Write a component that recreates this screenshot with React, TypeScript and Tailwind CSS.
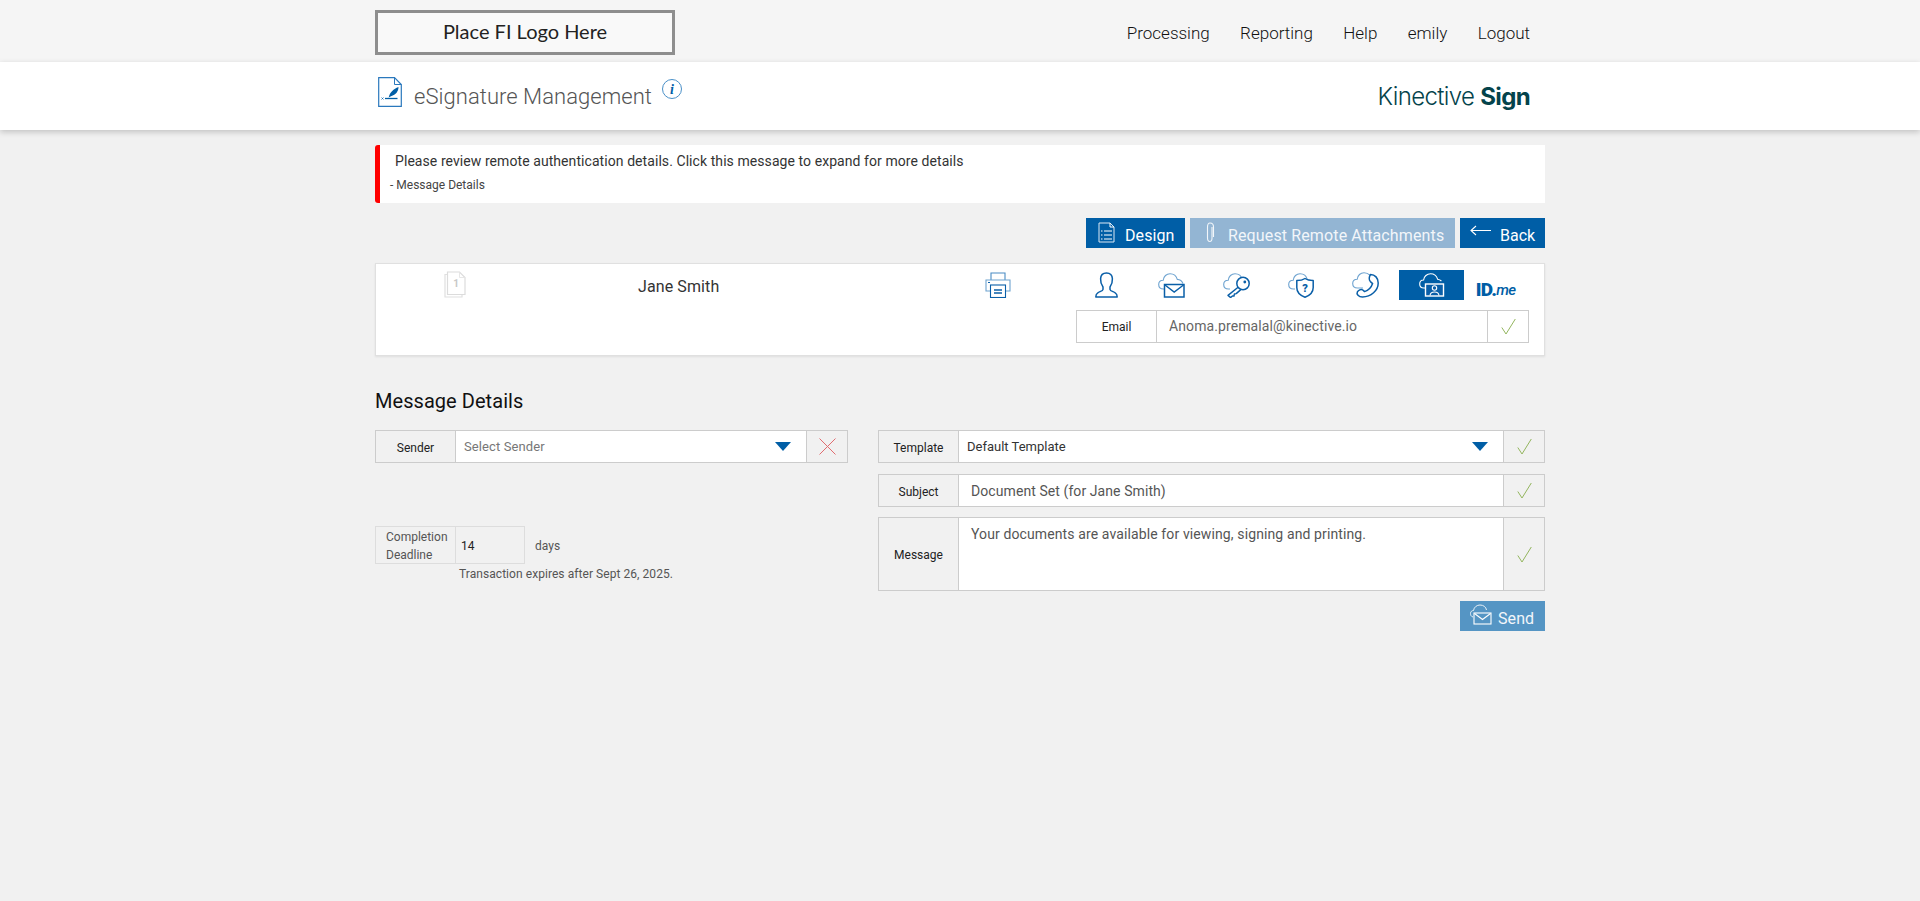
import React from "react";

const B = "#0a5fa8";
const L = "#6ea3d0";

function Svg({ w, h, children, className = "" }: { w: number; h: number; children: React.ReactNode; className?: string }) {
  return (
    <svg width={w} height={h} viewBox={`0 0 ${w} ${h}`} fill="none" className={`block shrink-0 ${className}`}>
      {children}
    </svg>
  );
}

const Cloud = ({ c = L }: { c?: string }) => (
  <path d="M7 16 H5.5 C2.5 16 0.7 14 0.7 11.5 C0.7 9 2.6 7.2 5.2 7.2 C5.6 3.4 8.6 0.7 12 0.7 C15.6 0.7 18.4 3 19.3 6.4 C21.8 6.6 24 8 25 10.5" stroke={c} strokeWidth="1.1" />
);

const Person = () => (
  <Svg w={23} h={26}>
    <path d="M8 15 C6.2 12.4 5.4 9.6 5.6 6.8 C5.8 3 8 1 11.5 1 C15 1 17.2 3 17.4 6.8 C17.6 9.6 16.8 12.4 15 15 V17.5 C15.2 19 18.4 19.6 20.2 20.8 C21.6 21.6 22.2 23 22.2 25 H0.8 C0.8 23 1.4 21.6 2.8 20.8 C4.6 19.6 7.8 19 8 17.5 Z" stroke={B} strokeWidth="1.5" strokeLinejoin="round" />
  </Svg>
);
const MailCloud = () => (
  <Svg w={27} h={25}>
    <Cloud />
    <rect x="6.5" y="11.5" width="19.5" height="12.5" stroke={B} strokeWidth="1.5" fill="#fff" />
    <path d="M7 12 L16.2 19 L25.5 12" stroke={B} strokeWidth="1.4" />
  </Svg>
);
const KeyCloud = () => (
  <Svg w={27} h={25}>
    <Cloud />
    <path d="M15.4 14 L5 22.4 L7.6 24.6 L9.4 23 L11 23 L11.4 21 L13.2 20.6 L17.8 16.6" stroke={B} strokeWidth="1.4" strokeLinejoin="round" fill="#fff" />
    <circle cx="20" cy="10.5" r="6.2" stroke={B} strokeWidth="1.5" fill="#fff" />
    <circle cx="21.8" cy="9" r="1.4" fill={B} />
  </Svg>
);
const ShieldCloud = () => (
  <Svg w={27} h={25}>
    <Cloud />
    <path d="M17 5.5 C19.2 7 21.8 7.6 25.2 7.6 V14.5 C25.2 19 22 22.4 17 24.2 C12 22.4 8.8 19 8.8 14.5 V7.6 C12.2 7.6 14.8 7 17 5.5 Z" stroke={B} strokeWidth="1.5" fill="#fff" strokeLinejoin="round" />
    <text x="17" y="18.5" textAnchor="middle" fontFamily="Roboto, sans-serif" fontWeight="900" fontSize="11" fill={B}>?</text>
  </Svg>
);
const PhoneCloud = () => (
  <Svg w={27} h={26} className="mr-[2px]">
    <path d="M11 16 H5.5 C2.5 16 0.7 14 0.7 11.5 C0.7 9 2.6 7.2 5.2 7.2 C5.6 3.4 8.6 0.7 12 0.7 C14.4 0.7 16.4 1.6 17.8 3.2" stroke={L} strokeWidth="1.1" />
    <path d="M18.5 2.5 C23 2.5 26.2 6 26.2 11 C26.2 18.5 19 25 10.5 25 C6.5 25 4.2 22 5.4 19.8 C6.4 18.2 9 17 10.5 17.8 L12.6 19.6 C16 18.6 19.4 15.2 20.6 11.6 L18.4 9.6 C17 8 17 5 18.5 2.5 Z" stroke={B} strokeWidth="1.5" strokeLinejoin="round" fill="#fff" />
  </Svg>
);
const IdCloud = () => (
  <Svg w={26} h={24} className="mb-[1px]">
    <path d="M6 15 H4.8 C2.4 15 0.7 13.2 0.7 11 C0.7 8.6 2.4 7 4.6 7 C5 3.4 8 0.7 11.5 0.7 C15 0.7 17.6 2.8 18.6 6.2 C20 6.4 21.4 7 22.4 8" stroke="#fff" strokeWidth="1.1" />
    <rect x="6.5" y="11" width="18" height="12" stroke="#fff" strokeWidth="1.4" fill={B} />
    <circle cx="15.5" cy="15" r="2.2" stroke="#fff" strokeWidth="1.1" />
    <path d="M11 22.5 C11.2 20.4 12.8 19 15.5 19 C18.2 19 19.8 20.4 20 22.5" stroke="#fff" strokeWidth="1.1" />
  </Svg>
);
const Check = () => (
  <Svg w={15} h={17}>
    <path d="M0.8 9.5 L5 16 L14.3 1" stroke="#93b55e" strokeWidth="1" />
  </Svg>
);
const Arrow = () => (
  <Svg w={16} h={9}>
    <path d="M0 0 H16 L8 9 Z" fill="#005ea6" />
  </Svg>
);

function Row({ label, children, h }: { label: string; children: React.ReactNode; h: string }) {
  return (
    <div className={`flex border border-[#cccccc] ${h}`}>
      <div className="w-[79px] shrink-0 flex items-center justify-center pt-[2px] text-[12px] text-[#222222]">{label}</div>
      <div className="flex-1 min-w-0 bg-white border-l border-r border-[#cccccc]">{children}</div>
      <div className="w-[40px] shrink-0 flex items-center justify-center">
        <Check />
      </div>
    </div>
  );
}

export default function App() {
  return (
    <div className="min-h-[901px] bg-[#f1f1f1] font-['Roboto',sans-serif] text-[#333333]">
      <header className="bg-[#f5f5f5] h-[62px]">
        <div className="w-[1170px] mx-auto h-full flex justify-between items-start">
          <div className="mt-[10px] w-[300px] h-[45px] border-[3px] border-[#8e8e8e] bg-[#f9f9f9] flex items-center justify-center text-[20px] font-['Lato',sans-serif] text-[#222222] pb-[3px]">
            Place FI Logo Here
          </div>
          <nav className="flex gap-[30.4px] pr-[15px] mt-[23px] text-[17px] leading-[20px] font-light text-[#111111]">
            <span>Processing</span>
            <span>Reporting</span>
            <span>Help</span>
            <span>emily</span>
            <span>Logout</span>
          </nav>
        </div>
      </header>

      <div className="bg-white h-[68px] shadow-[0_2px_6px_rgba(0,0,0,0.2)] relative">
        <div className="w-[1170px] mx-auto h-full flex items-start">
          <div className="ml-[3px] mt-[15px]">
            <Svg w={24} h={30}>
              <path d="M0.7 0.7 H16.5 L23.3 7.5 V29.3 H0.7 Z" stroke="#2a78bd" strokeWidth="1.2" />
              <path d="M16.5 0.7 V7.5 H23.3" stroke="#2a78bd" strokeWidth="1" />
              <path d="M11 19.5 C12 15.5 15.5 12 20.5 10 C20.5 14 18 18 13 19.2 L10.5 20.5 Z" fill="#005ea6" />
              <path d="M7 21.5 H19.5" stroke="#005ea6" strokeWidth="1.3" />
              <path d="M3.5 20.5 L5.5 22.5 M5.5 20.5 L3.5 22.5" stroke="#005ea6" strokeWidth="0.7" />
            </Svg>
          </div>
          <h1 className="ml-[12px] mt-[19px] text-[22px] leading-[32px] font-light tracking-[0.05px] text-[#555555]">eSignature Management</h1>
          <div className="ml-[10px] mt-[17px] w-[20px] h-[20px] rounded-full border border-[#4a90c8] flex items-center justify-center font-['Liberation_Serif',serif] italic font-bold text-[14px] text-[#005ea6]">
            i
          </div>
          <div className="ml-auto pr-[15px] mt-[20px] text-[24px] leading-[30px] font-['Inter',sans-serif] text-[#04434b] tracking-[-0.65px]">
            <span className="font-light">Kinective </span>
            <span className="font-bold">Sign</span>
          </div>
        </div>
      </div>

      <main className="w-[1170px] mx-auto">
        <div className="mt-[15px] h-[58px] bg-white border-l-[5px] border-[#ff0000] rounded-l-[3px]">
          <p className="pl-[15px] pt-[6px] text-[14px] leading-[20px] tracking-[0.07px] text-[#333333]">Please review remote authentication details. Click this message to expand for more details</p>
          <p className="pl-[10px] mt-[6px] text-[12px] leading-[16px] text-[#444444]">- Message Details</p>
        </div>

        <div className="mt-[15px] flex justify-end gap-[5px]">
          <button className="w-[99px] h-[30px] bg-[#005ea6] text-white text-[16px] flex items-center pl-[12px] whitespace-nowrap">
            <Svg w={17} h={21} className="mb-[2px]">
              <path d="M1 1 H12 L16 5 V20 H1 Z" stroke="#dbe8f4" strokeWidth="1" />
              <path d="M12 1 V5 H16 M6 9 H14 M6 13 H14 M6 17 H14" stroke="#fff" strokeWidth="1" />
              <path d="M3 9 H4.5 M3 13 H4.5 M3 17 H4.5" stroke="#fff" strokeWidth="1.2" />
            </Svg>
            <span className="ml-[10px] pt-[5px] tracking-[0.1px]">Design</span>
          </button>
          <button className="w-[265px] h-[30px] bg-[#93b5d3] text-[#f2f6fa] text-[16px] flex items-center pl-[15px] whitespace-nowrap">
            <Svg w={10} h={21} className="mb-[2px]">
              <path d="M7 5 V16 C7 18 6.2 19.5 4.8 19.5 C3.2 19.5 2.5 18 2.5 16 V5 C2.5 2.5 3.5 1 5 1 C6.8 1 8.5 2.5 8.5 5 V15" stroke="#f2f6fa" strokeWidth="1.1" />
            </Svg>
            <span className="ml-[13px] pt-[5px] tracking-[0.13px]">Request Remote Attachments</span>
          </button>
          <button className="w-[85px] h-[30px] bg-[#005ea6] text-white text-[16px] flex items-center pl-[10px] whitespace-nowrap">
            <Svg w={21} h={11} className="mb-[5px]">
              <path d="M21 5.5 H1 M6 1 L1 5.5 L6 10" stroke="#fff" strokeWidth="1.1" />
            </Svg>
            <span className="ml-[9px] pt-[5px]">Back</span>
          </button>
        </div>

        <section className="mt-[15px] h-[93px] bg-white border border-[#e0e0e0] shadow-[0_1px_2px_rgba(0,0,0,0.08)] flex items-start">
          <div className="ml-[68px] mt-[7px]">
            <Svg w={22} h={27}>
              <path d="M3.5 3.5 H1 V26 H18 V23.5" stroke="#e0e0e0" strokeWidth="1.2" />
              <path d="M3.5 1 H15.5 L21 6.5 V23.5 H3.5 Z" stroke="#dcdcdc" strokeWidth="1.2" />
              <path d="M15.5 1 V6.5 H21" stroke="#e4e4e4" strokeWidth="0.9" />
              <text x="12" y="16" textAnchor="middle" fontFamily="Roboto, sans-serif" fontWeight="700" fontSize="10" fill="#c8c8c8">1</text>
            </Svg>
          </div>
          <div className="ml-[172px] mt-[13px] text-[16px] leading-[20px] tracking-[0.1px] text-[#333333] w-[84px] whitespace-nowrap">Jane Smith</div>
          <div className="ml-[263px] mt-[8px]">
            <Svg w={26} h={26}>
              <path d="M6 8 V1 H20 V8" stroke="#4a8cc4" strokeWidth="1.1" />
              <path d="M5 19 H1 V8 H25 V19 H21" stroke="#6ea3d0" strokeWidth="1.1" />
              <rect x="5.5" y="13" width="15" height="12.5" stroke={B} strokeWidth="1.1" fill="#fff" />
              <path d="M9 18 H17 M9 21 H17" stroke={B} strokeWidth="1.3" />
              <path d="M3 10.5 H5" stroke={B} strokeWidth="1.2" />
            </Svg>
          </div>
          <div className="ml-auto w-[470px] pr-[15px] mt-[6px]">
            <div className="flex h-[30px]">
              <div className="w-[65px] flex items-center justify-center"><Person /></div>
              <div className="w-[65px] flex items-center justify-center"><MailCloud /></div>
              <div className="w-[65px] flex items-center justify-center"><KeyCloud /></div>
              <div className="w-[65px] flex items-center justify-center"><ShieldCloud /></div>
              <div className="w-[65px] flex items-center justify-center"><PhoneCloud /></div>
              <div className="w-[65px] flex items-center justify-center bg-[#005ea6]"><IdCloud /></div>
              <div className="w-[65px] flex items-center justify-center pt-[9px] pr-[2px] text-[#005ea6] font-black text-[19px] leading-[18px] tracking-[-0.7px]">
                ID.<span className="font-medium italic text-[15px]">me</span>
              </div>
            </div>
            <div className="mt-[10px] ml-[2px] h-[33px] flex border border-[#cccccc]">
              <div className="w-[79px] flex items-center justify-center text-[12px] text-[#222222]">Email</div>
              <div className="flex-1 border-l border-r border-[#cccccc] flex items-center pl-[12px] text-[14px] tracking-[0.1px] text-[#666666]">Anoma.premalal@kinective.io</div>
              <div className="w-[40px] flex items-center justify-center"><Check /></div>
            </div>
          </div>
        </section>

        <h2 className="mt-[33px] text-[20px] leading-[24px] font-normal tracking-[0.05px] text-[#111111]">Message Details</h2>

        <div className="mt-[17px] flex gap-[30px] items-start">
          <div className="w-[473px]">
            <div className="flex h-[33px] border border-[#cccccc]">
              <div className="w-[79px] flex items-center justify-center pt-[2px] text-[12px] text-[#222222]">Sender</div>
              <div className="flex-1 bg-white border-l border-r border-[#cccccc] flex items-center justify-between pl-[8px] pr-[15px] text-[13px] tracking-[0.1px] text-[#777777]">
                <span>Select Sender</span>
                <Arrow />
              </div>
              <div className="w-[40px] flex items-center justify-center">
                <Svg w={17} h={17}>
                  <path d="M0.5 0.5 L16.5 16.5 M16.5 0.5 L0.5 16.5" stroke="#e06c70" strokeWidth="1" />
                </Svg>
              </div>
            </div>
            <div className="mt-[63px] flex items-center">
              <div className="flex h-[38px] w-[150px] border border-[#dddddd]">
                <div className="w-[79px] pl-[10px] pt-[1px] text-[12px] leading-[18px] text-[#555555]">Completion<br />Deadline</div>
                <div className="flex-1 border-l border-[#dddddd] flex items-center pl-[5px] pt-[2px] text-[12px] text-[#222222]">14</div>
              </div>
              <span className="ml-[10px] pt-[2px] text-[12px] text-[#555555]">days</span>
            </div>
            <p className="ml-[84px] mt-[2px] text-[12px] leading-[16px] tracking-[0.06px] text-[#555555]">Transaction expires after Sept 26, 2025.</p>
          </div>

          <div className="w-[667px] flex flex-col">
            <Row label="Template" h="h-[33px]">
              <div className="h-full flex items-center justify-between pl-[8px] pr-[15px] text-[13px] text-[#333333]">
                <span>Default Template</span>
                <Arrow />
              </div>
            </Row>
            <div className="mt-[11px]">
              <Row label="Subject" h="h-[33px]">
                <div className="h-full flex items-center pl-[12px] pt-[2px] text-[14px] tracking-[0.08px] text-[#555555]">Document Set (for Jane Smith)</div>
              </Row>
            </div>
            <div className="mt-[10px]">
              <Row label="Message" h="h-[74px]">
                <div className="pl-[12px] pt-[6px] text-[14px] leading-[20px] tracking-[0.115px] text-[#555555]">Your documents are available for viewing, signing and printing.</div>
              </Row>
            </div>
            <div className="flex justify-end mt-[10px]">
              <button className="w-[85px] h-[30px] bg-[#5595c4] text-[#f2f6fa] text-[16px] flex items-center pl-[10px] whitespace-nowrap">
                <Svg w={22} h={21} className="mb-[3px]">
                  <path d="M3 13 C1 12.5 0.5 11 0.5 9.5 C0.5 7.5 2 6.5 3.5 6.5 C4 3 7 1 10 1 C13.5 1 16 3 16.5 6" stroke="#e8f0f7" strokeWidth="1" />
                  <rect x="4" y="9" width="17" height="11" stroke="#fff" strokeWidth="1.1" />
                  <path d="M4.5 9.5 L12.5 15.5 L20.5 9.5" stroke="#fff" strokeWidth="1.1" />
                </Svg>
                <span className="ml-[6px] pt-[5px] tracking-[0.1px]">Send</span>
              </button>
            </div>
          </div>
        </div>
      </main>
    </div>
  );
}
